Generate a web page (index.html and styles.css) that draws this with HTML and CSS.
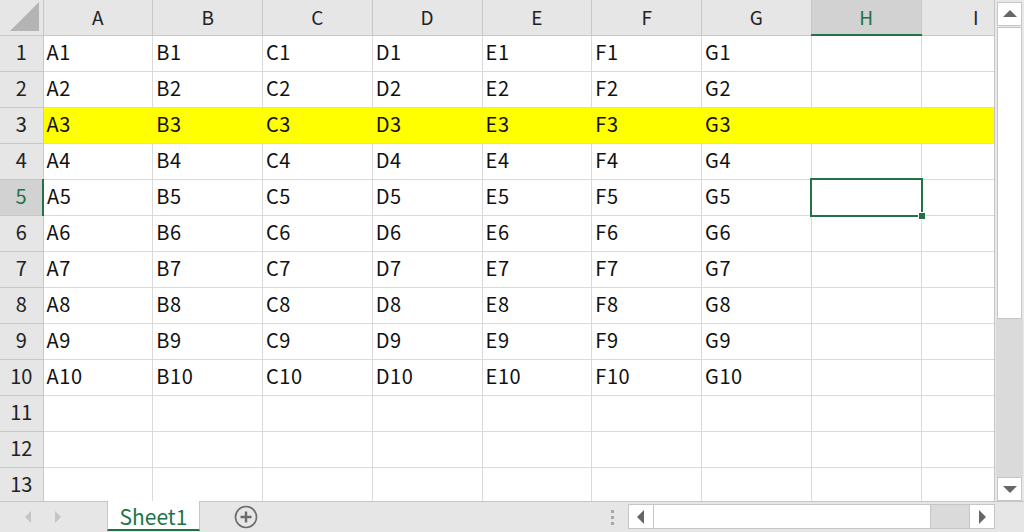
FILE: index.html
```html
<!DOCTYPE html>
<html>
<head>
<meta charset="utf-8">
<link rel="stylesheet" href="styles.css">
</head>
<body>
<div class="app">
  <div class="main">
    <div class="gridwrap">
      <table class="sheet">
        <colgroup>
          <col class="c-rh"><col class="c"><col class="c"><col class="c"><col class="c"><col class="c"><col class="c"><col class="c"><col class="c"><col class="c">
        </colgroup>
        <thead>
          <tr class="hdr">
            <th class="corner"><span class="tri"></span></th>
            <th>A</th><th>B</th><th>C</th><th>D</th><th>E</th><th>F</th><th>G</th><th class="hsel">H</th><th>I</th>
          </tr>
        </thead>
        <tbody>
          <tr><th>1</th><td>A1</td><td>B1</td><td>C1</td><td>D1</td><td>E1</td><td>F1</td><td>G1</td><td></td><td></td></tr>
          <tr><th>2</th><td>A2</td><td>B2</td><td>C2</td><td>D2</td><td>E2</td><td>F2</td><td>G2</td><td></td><td></td></tr>
          <tr class="yellow"><th>3</th><td>A3</td><td>B3</td><td>C3</td><td>D3</td><td>E3</td><td>F3</td><td>G3</td><td></td><td></td></tr>
          <tr><th>4</th><td>A4</td><td>B4</td><td>C4</td><td>D4</td><td>E4</td><td>F4</td><td>G4</td><td></td><td></td></tr>
          <tr><th class="rsel">5</th><td>A5</td><td>B5</td><td>C5</td><td>D5</td><td>E5</td><td>F5</td><td>G5</td><td class="active"><div class="selbox"><span class="handle"></span></div></td><td></td></tr>
          <tr><th>6</th><td>A6</td><td>B6</td><td>C6</td><td>D6</td><td>E6</td><td>F6</td><td>G6</td><td></td><td></td></tr>
          <tr><th>7</th><td>A7</td><td>B7</td><td>C7</td><td>D7</td><td>E7</td><td>F7</td><td>G7</td><td></td><td></td></tr>
          <tr><th>8</th><td>A8</td><td>B8</td><td>C8</td><td>D8</td><td>E8</td><td>F8</td><td>G8</td><td></td><td></td></tr>
          <tr><th>9</th><td>A9</td><td>B9</td><td>C9</td><td>D9</td><td>E9</td><td>F9</td><td>G9</td><td></td><td></td></tr>
          <tr><th>10</th><td>A10</td><td>B10</td><td>C10</td><td>D10</td><td>E10</td><td>F10</td><td>G10</td><td></td><td></td></tr>
          <tr><th>11</th><td></td><td></td><td></td><td></td><td></td><td></td><td></td><td></td><td></td></tr>
          <tr><th>12</th><td></td><td></td><td></td><td></td><td></td><td></td><td></td><td></td><td></td></tr>
          <tr><th>13</th><td></td><td></td><td></td><td></td><td></td><td></td><td></td><td></td><td></td></tr>
        </tbody>
      </table>
    </div>
    <div class="vscroll">
      <div class="sbtn up"><svg width="14" height="8" viewBox="0 0 14 8"><path d="M0 7 L7 0 L14 7 Z" fill="#666"/></svg></div>
      <div class="vthumb"></div>
      <div class="vtrack"></div>
      <div class="sbtn down"><svg width="14" height="8" viewBox="0 0 14 8"><path d="M0 1 L7 8 L14 1 Z" fill="#666"/></svg></div>
    </div>
  </div>
  <div class="bottom">
    <div class="nav">
      <svg width="8" height="12" viewBox="0 0 8 12"><path d="M7 0 L1 6 L7 12 Z" fill="#c4c4c4"/></svg>
      <svg width="8" height="12" viewBox="0 0 8 12"><path d="M1 0 L7 6 L1 12 Z" fill="#c4c4c4"/></svg>
    </div>
    <div class="tab">Sheet1</div>
    <div class="addsheet">
      <svg width="24" height="24" viewBox="0 0 24 24"><circle cx="12" cy="12" r="10.5" fill="none" stroke="#6a6a6a" stroke-width="1.6"/><path d="M12 6.5 V17.5 M6.5 12 H17.5" stroke="#6a6a6a" stroke-width="2.4"/></svg>
    </div>
    <div class="spacer"></div>
    <div class="dots"><span></span><span></span><span></span></div>
    <div class="hscroll">
      <div class="sbtn left"><svg width="8" height="14" viewBox="0 0 8 14"><path d="M7 0 L0 7 L7 14 Z" fill="#666"/></svg></div>
      <div class="hthumb"></div>
      <div class="htrack"></div>
      <div class="sbtn right"><svg width="8" height="14" viewBox="0 0 8 14"><path d="M1 0 L8 7 L1 14 Z" fill="#666"/></svg></div>
    </div>
    <div class="corner-br"></div>
  </div>
</div>
</body>
</html>
```

FILE: styles.css
```css
html, body {
  margin: 0;
  padding: 0;
  background: #ffffff;
}
body {
  width: 1024px;
  height: 532px;
  overflow: hidden;
  font-family: "Noto Sans CJK JP", "Noto Sans", sans-serif;
}
.app {
  display: flex;
  flex-direction: column;
  width: 1024px;
  height: 532px;
}
.main {
  display: flex;
  height: 501px;
  flex: none;
}
.gridwrap {
  width: 995px;
  overflow: hidden;
  border-right: 1px solid #c6c6c6;
  box-sizing: border-box;
  background: #fff;
}
.sheet {
  border-collapse: collapse;
  table-layout: fixed;
  width: 1031px;
}
.c-rh { width: 43px; }
.c { width: 109.75px; }
.sheet th, .sheet td {
  height: 36px;
  padding: 0;
  box-sizing: border-box;
  font-size: 20px;
  line-height: 22px;
  font-weight: normal;
  white-space: nowrap;
  overflow: visible;
}
.sheet td {
  border: 1px solid #dadada;
  color: #111;
  padding-left: 3px;
  padding-bottom: 2px;
  text-align: left;
  letter-spacing: 0.6px;
}
.sheet tbody th {
  background: #e6e6e6;
  color: #222;
  border: 1px solid #c8c8c8;
  border-left: none;
  text-align: center;
  padding-bottom: 2px;
}
.sheet thead th {
  height: 35px;
  background: #e6e6e6;
  color: #222;
  border: 1px solid #c8c8c8;
  border-top: none;
  text-align: center;
  font-size: 19px;
}
.sheet thead th.corner {
  border-left: none;
  position: relative;
}
.tri {
  position: absolute;
  right: 4px;
  bottom: 4px;
  width: 0;
  height: 0;
  border-left: 29px solid transparent;
  border-bottom: 29px solid #b4b4b4;
}
.sheet thead th.hsel {
  background: #d2d2d2;
  color: #217346;
  border-bottom: 2px solid #217346;
}
.sheet tbody th.rsel {
  background: #d2d2d2;
  color: #217346;
  border-right: 2px solid #217346;
}
.yellow td {
  background: #ffff00;
  border-left-color: #ffff00;
  border-right-color: #ffff00;
}
.sheet td.active {
  position: relative;
}
.selbox {
  position: absolute;
  left: -2px;
  top: -2px;
  right: -2px;
  bottom: -2px;
  border: 2px solid #217346;
}
.handle {
  position: absolute;
  right: -5px;
  bottom: -5px;
  width: 6px;
  height: 6px;
  background: #217346;
  border: 1px solid #fff;
}
.vscroll {
  width: 29px;
  background: #e8e8e8;
  display: flex;
  flex-direction: column;
  padding: 2px 2px 0 2px;
  box-sizing: border-box;
}
.sbtn {
  background: #fff;
  border: 1px solid #c6c6c6;
  box-sizing: border-box;
  display: flex;
  align-items: center;
  justify-content: center;
  flex: none;
}
.sbtn.up, .sbtn.down {
  height: 24px;
}
.vthumb {
  height: 292px;
  background: #fff;
  border: 1px solid #c6c6c6;
  box-sizing: border-box;
  margin-top: 1px;
  flex: none;
}
.vtrack {
  flex: 1;
  background: #dadada;
  margin: 0 -1px;
}
.bottom {
  height: 31px;
  flex: none;
  background: #e6e6e6;
  border-top: 1px solid #c6c6c6;
  display: flex;
  align-items: stretch;
  box-sizing: border-box;
}
.nav {
  width: 107px;
  display: flex;
  align-items: center;
  gap: 22px;
  padding-left: 24px;
  box-sizing: border-box;
}
.tab {
  width: 93px;
  background: #fff;
  color: #217346;
  font-size: 21px;
  display: flex;
  align-items: center;
  justify-content: center;
  border-bottom: 2px solid #217346;
  border-left: 1px solid #c6c6c6;
  border-right: 1px solid #c6c6c6;
  margin-top: -1px;
  margin-bottom: 1px;
  box-sizing: border-box;
  padding-top: 1px;
}
.addsheet {
  width: 92px;
  display: flex;
  align-items: center;
  justify-content: center;
}
.spacer {
  flex: 1;
}
.dots {
  display: flex;
  flex-direction: column;
  justify-content: center;
  gap: 3px;
  width: 24px;
  align-items: center;
  margin-right: 4px;
}
.dots span {
  width: 3px;
  height: 3px;
  background: #a8a8a8;
}
.hscroll {
  width: 367px;
  display: flex;
  margin: 2px 0 3px;
  border: 1px solid #c6c6c6;
  box-sizing: border-box;
}
.hscroll .sbtn {
  width: 25px;
  border: none;
}
.hscroll .sbtn.left {
  border-right: 1px solid #c6c6c6;
}
.hscroll .sbtn.right {
  border-left: 1px solid #c6c6c6;
}
.hthumb {
  width: 277px;
  background: #fff;
  border-right: 1px solid #c6c6c6;
  box-sizing: border-box;
}
.htrack {
  flex: 1;
  background: #dadada;
}
.corner-br {
  width: 29px;
}
```
